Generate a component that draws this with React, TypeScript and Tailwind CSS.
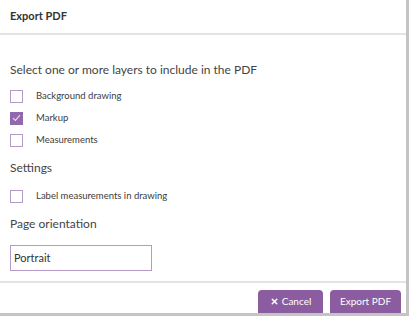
import { X } from "lucide-react";

type CheckRowProps = {
  label: string;
  checked?: boolean;
};

function CheckRow({ label, checked = false }: CheckRowProps) {
  return (
    <div className="flex items-center h-[22px]">
      <span
        className={
          checked
            ? "w-[13px] h-[13px] flex items-center justify-center bg-[#9168ab] border border-[#9168ab]"
            : "w-[13px] h-[13px] border border-[#b49ac6] bg-white"
        }
      >
        {checked && (
          <svg width="9" height="8" viewBox="0 0 9 8" fill="none">
            <path d="M1 4.2 L3.4 6.4 L8 1.2" stroke="#e9def0" strokeWidth="1.1" />
          </svg>
        )}
      </span>
      <span className="ml-[13px] text-[9.5px] text-[#3c3c3c]">{label}</span>
    </div>
  );
}

export default function App() {
  return (
    <div className="w-[412px] h-[320px] bg-white font-['Lato',sans-serif] overflow-hidden">
      <div className="w-[409px] h-[316px] flex flex-col bg-white border-r-[3px] border-b-[3px] border-[#c4c4c4] overflow-hidden">
        <div className="h-[35px] flex items-center px-[10px] border-b-2 border-[#e4e4e4]">
          <span className="text-[11px] font-bold text-[#333]">Export PDF</span>
        </div>

        <div className="flex-1 px-[10px] pt-[29px]">
          <div className="text-[12px] text-[#444] leading-none">Select one or more layers to include in the PDF</div>
          <div className="mt-[9px] flex flex-col">
            <CheckRow label="Background drawing" />
            <CheckRow label="Markup" checked />
            <CheckRow label="Measurements" />
          </div>
          <div className="mt-[11px] text-[12px] text-[#444] leading-none">Settings</div>
          <div className="mt-[11px]">
            <CheckRow label="Label measurements in drawing" />
          </div>
          <div className="mt-[11px] text-[12px] text-[#444] leading-none">Page orientation</div>
          <div className="mt-[15px] w-[142px] h-[26px] border border-[#b49ac6] flex items-center px-[3px] text-[11px] text-[#333]">
            Portrait
          </div>
        </div>

        <div className="h-[32px] border-t-2 border-[#e4e4e4] flex items-end justify-end gap-[7px] pr-[5px]">
          <button className="w-[65px] h-[23px] rounded-t-[4px] bg-[#8b5c9f] text-white text-[10px] flex items-center justify-center gap-[3px]">
            <X size={9} strokeWidth={4} />
            Cancel
          </button>
          <button className="w-[71px] h-[23px] rounded-t-[4px] bg-[#8b5c9f] text-white text-[10px] flex items-center justify-center">
            Export PDF
          </button>
        </div>
      </div>
    </div>
  );
}
